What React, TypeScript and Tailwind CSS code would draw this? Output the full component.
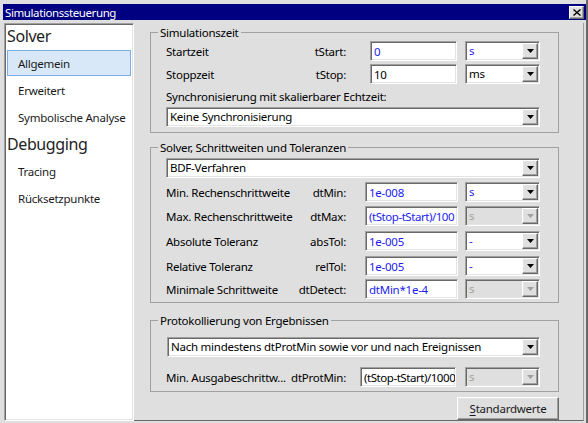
import React from 'react';

const sunken =
  'border border-t-[#a0a0a0] border-l-[#a0a0a0] border-r-white border-b-white shadow-[inset_1px_1px_0_#696969,inset_-1px_-1px_0_#e3e3e3]';
const raised =
  'border border-t-white border-l-white border-r-[#696969] border-b-[#696969] shadow-[inset_-1px_-1px_0_#a0a0a0,inset_1px_1px_0_#e3e3e3]';

function Arrow({ disabled }: { disabled?: boolean }) {
  return (
    <div className={`w-[16px] h-full shrink-0 bg-[#dfdfdf] flex items-center justify-center ${raised}`}>
      <svg width="7" height="4" viewBox="0 0 7 4">
        <path d="M0 0h7L3.5 4z" fill={disabled ? '#a0a0a0' : '#000'} />
      </svg>
    </div>
  );
}

function Combo({ text, blue, disabled, className = '' }: { text: string; blue?: boolean; disabled?: boolean; className?: string }) {
  const color = disabled ? 'text-[#a0a0a0]' : blue ? 'text-[#1c1cf0]' : 'text-black';
  return (
    <div className={`h-[20px] shrink-0 p-[1px] flex items-stretch ${disabled ? 'bg-[#dfdfdf]' : 'bg-white'} ${sunken} ${className}`}>
      <span className={`flex-1 pl-[2px] leading-[16px] whitespace-nowrap overflow-hidden ${color}`}>{text}</span>
      <Arrow disabled={disabled} />
    </div>
  );
}

function Input({ value, blue, className = '' }: { value: string; blue?: boolean; className?: string }) {
  return (
    <div
      className={`h-[20px] shrink-0 bg-white pl-[3px] flex items-center whitespace-nowrap overflow-hidden ${sunken} ${
        blue ? 'text-[#1c1cf0]' : 'text-black'
      } ${className}`}
    >
      {value}
    </div>
  );
}

function Row({ label, sym, className = '', children }: { label: string; sym: string; className?: string; children: React.ReactNode }) {
  return (
    <div className={`flex items-center h-[20px] ${className}`}>
      <span className="flex-1 whitespace-nowrap">{label}</span>
      <span className="whitespace-nowrap">{sym}</span>
      {children}
    </div>
  );
}

function Group({ title, className = '', children }: { title: string; className?: string; children: React.ReactNode }) {
  return (
    <fieldset className={`border border-[#a0a0a0] pl-[15px] pr-[18px] min-w-0 ${className}`}>
      <legend className="ml-[-8px] px-[2px] leading-[15px]">{title}</legend>
      {children}
    </fieldset>
  );
}

const navItems = [
  { text: 'Solver', head: true },
  { text: 'Allgemein', active: true },
  { text: 'Erweitert' },
  { text: 'Symbolische Analyse' },
  { text: 'Debugging', head: true },
  { text: 'Tracing' },
  { text: 'Rücksetzpunkte' },
];

export default function App() {
  return (
    <div className="w-[588px] h-[423px] bg-[#dfdfdf] border-r-2 border-r-[#696969] pl-[3px] pt-[4px] pb-[2px] flex flex-col text-[11.5px] tracking-[-0.25px] leading-[15px] text-black font-['Noto_Sans',sans-serif]">
      {/* title bar */}
      <div className="h-[16px] shrink-0 bg-[#000080] flex items-center pl-[2px] pr-[2px]">
        <span className="flex-1 text-white text-[11.5px] tracking-[-0.4px]">Simulationssteuerung</span>
        <div className={`w-[15px] h-[13px] bg-[#dfdfdf] flex items-center justify-center ${raised}`}>
          <svg width="8" height="7" viewBox="0 0 8 7">
            <path d="M0.5 0.5L7.5 6.5M7.5 0.5L0.5 6.5" stroke="#000" strokeWidth="1.4" />
          </svg>
        </div>
      </div>

      <div className="flex-1 flex pt-[3px] min-h-0">
        {/* sidebar */}
        <div className={`ml-[1px] w-[130px] shrink-0 bg-white pl-[1px] pr-[2px] ${sunken}`}>
          <div className="mt-[-1px]">
            {navItems.map((it) =>
              it.head ? (
                <div key={it.text} className="h-[27px] flex items-center pl-[1px] text-[16px] tracking-[-0.4px] text-[#1e1e1e]">
                  {it.text}
                </div>
              ) : it.active ? (
                <div key={it.text} className="h-[27px]">
                  <div className="ml-[1px] h-[26px] border border-[#7aaee8] bg-[#d9e8f8] flex items-center pl-[10px] text-[#1a1a1a]">
                    {it.text}
                  </div>
                </div>
              ) : (
                <div key={it.text} className="h-[27px] flex items-center pl-[12px] whitespace-nowrap text-[#1a1a1a]">
                  {it.text}
                </div>
              )
            )}
          </div>
        </div>

        {/* main */}
        <div className="flex-1 min-w-0 mr-[2px] border-r border-r-[#a0a0a0] border-b border-b-[#696969] pl-[16px] pr-[24px] pt-[2px] flex flex-col">
          <Group title="Simulationszeit" className="pb-[5px]">
            <Row label="Startzeit" sym="tStart:" className="mt-[1px]">
              <Input value="0" blue className="ml-[24px] w-[87px]" />
              <Combo text="s" blue className="ml-[8px] w-[75px]" />
            </Row>
            <Row label="Stoppzeit" sym="tStop:" className="mt-[3px]">
              <Input value="10" className="ml-[24px] w-[87px]" />
              <Combo text="ms" className="ml-[8px] w-[75px]" />
            </Row>
            <div className="mt-[5px]">Synchronisierung mit skalierbarer Echtzeit:</div>
            <Combo text="Keine Synchronisierung" className="mt-[3px]" />
          </Group>

          <Group title="Solver, Schrittweiten und Toleranzen" className="mt-[7px] pt-[3px] pb-[3px]">
            <Combo text="BDF-Verfahren" />
            <Row label="Min. Rechenschrittweite" sym="dtMin:" className="mt-[4px]">
              <Input value="1e-008" blue className="ml-[19px] w-[93px]" />
              <Combo text="s" blue className="ml-[7px] w-[75px]" />
            </Row>
            <Row label="Max. Rechenschrittweite" sym="dtMax:" className="mt-[4px]">
              <Input value="(tStop-tStart)/100" blue className="ml-[19px] w-[93px] tracking-[-0.45px]" />
              <Combo text="s" disabled className="ml-[7px] w-[75px]" />
            </Row>
            <Row label="Absolute Toleranz" sym="absTol:" className="mt-[5px]">
              <Input value="1e-005" blue className="ml-[19px] w-[93px]" />
              <Combo text="-" blue className="ml-[7px] w-[75px]" />
            </Row>
            <Row label="Relative Toleranz" sym="relTol:" className="mt-[5px]">
              <Input value="1e-005" blue className="ml-[19px] w-[93px]" />
              <Combo text="-" blue className="ml-[7px] w-[75px]" />
            </Row>
            <Row label="Minimale Schrittweite" sym="dtDetect:" className="mt-[3px]">
              <Input value="dtMin*1e-4" blue className="ml-[19px] w-[93px]" />
              <Combo text="s" disabled className="ml-[7px] w-[75px]" />
            </Row>
          </Group>

          <Group title="Protokollierung von Ergebnissen" className="mt-[10px] pt-[9px] pb-[4px]">
            <Combo text="Nach mindestens dtProtMin sowie vor und nach Ereignissen" className="ml-[1px]" />
            <Row label="Min. Ausgabeschrittw..." sym="dtProtMin:" className="mt-[10px]">
              <Input value="(tStop-tStart)/1000" className="ml-[14px] w-[96px] pl-[2px] tracking-[-0.45px]" />
              <Combo text="s" disabled className="ml-[9px] w-[75px]" />
            </Row>
          </Group>

          <div className="mt-[5px] flex justify-end">
            <button className={`w-[102px] h-[23px] bg-[#dfdfdf] text-[#1a1a1a] ${raised}`}>
              <span className="underline underline-offset-2">S</span>tandardwerte
            </button>
          </div>
        </div>
      </div>
    </div>
  );
}
